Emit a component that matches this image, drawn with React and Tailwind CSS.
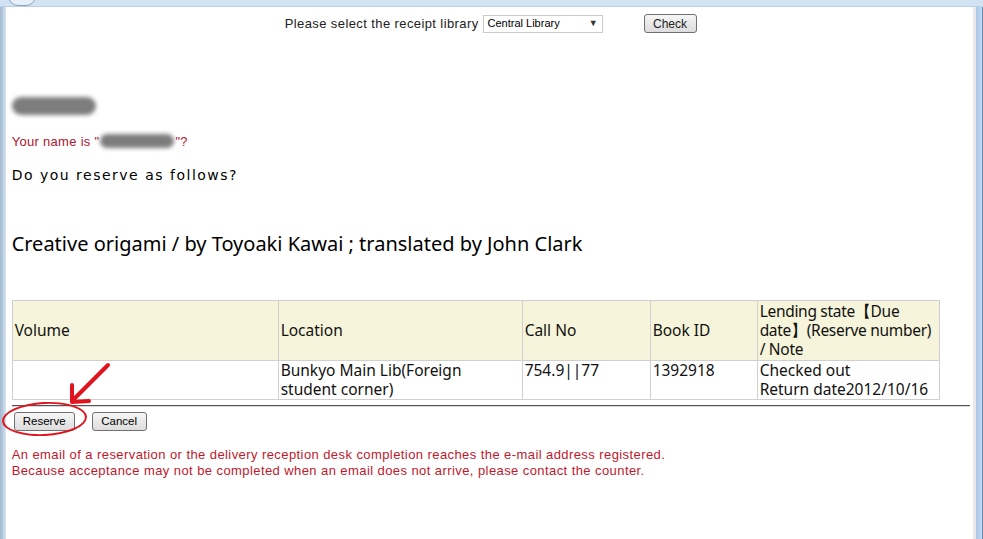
import { useState } from "react";

const rows = [
  {
    volume: "",
    location: "Bunkyo Main Lib(Foreign student corner)",
    callNo: "754.9||77",
    bookId: "1392918",
    state: "Checked out\nReturn date2012/10/16",
  },
];

const Blur = ({ className }) => (
  <span className={`inline-block rounded-full bg-[#7d7d7d] blur-[2px] ${className}`} />
);

const App = () => {
  const [library, setLibrary] = useState("Central Library");

  return (
    <div className="relative w-[983px] h-[539px] overflow-hidden bg-white flex flex-col">
      {/* window chrome top */}
      <div className="relative h-[7px] bg-[#d3e3f3] border-b border-[#b9cfe6]">
        <div className="absolute left-[8px] -top-[14px] w-[28px] h-[20px] rounded-full border border-[#8aa4bf] bg-[#e6eef7]" />
      </div>

      <div className="flex flex-1 min-h-0">
        <div className="w-[6px] bg-gradient-to-r from-[#9fb7cf] to-[#d6e4f2]" />

        {/* page */}
        <div className="relative flex-1 pl-[6px] pr-[3px] font-['Liberation_Sans',sans-serif] text-black">
          {/* library selector */}
          <div className="flex items-center justify-center pt-[7px] text-[13px] tracking-[0.4px] leading-none">
            <span className="text-[#222]">Please select the receipt library</span>
            <div className="ml-[4px] relative w-[120px] h-[18px] border border-[#c9c9c9] bg-white flex items-center pl-[4px] text-[11px] tracking-normal">
              <span>{library}</span>
              <span className="absolute right-[4px] top-[3px] text-[9px] text-[#333]">▼</span>
            </div>
            <button
              onClick={() => setLibrary("Central Library")}
              className="ml-[41px] w-[53px] h-[19px] rounded-[3px] border border-[#707070] bg-gradient-to-b from-[#f6f6f6] to-[#dcdcdc] text-[12px] tracking-normal text-[#222]"
            >
              Check
            </button>
          </div>

          {/* user */}
          <div className="mt-[62px] h-[22px]">
            <Blur className="w-[84px] h-[18px] mt-[2px]" />
          </div>
          <div className="mt-[17px] flex items-center text-[13px] tracking-[0.3px] text-[#b0152f] leading-none">
            <span>Your name is &quot;</span>
            <Blur className="w-[74px] h-[14px] mx-[1px]" />
            <span>&quot;?</span>
          </div>

          <p className="mt-[20px] text-[14px] tracking-[1.5px] leading-none font-['DejaVu_Sans',sans-serif]">
            Do you reserve as follows?
          </p>

          <h2 className="mt-[52px] text-[20px] leading-none font-['Noto_Sans',sans-serif]">
            Creative origami / by Toyoaki Kawai ; translated by John Clark
          </h2>

          {/* holdings table */}
          <table className="mt-[46px] w-[928px] border-collapse text-[15.5px] leading-[19px] font-['Noto_Sans',sans-serif] text-[#111]">
            <thead>
              <tr className="bg-[#f6f4da] h-[60px]">
                <th className="w-[266px] border border-[#cfcfcf] px-[2px] text-left font-normal align-middle">Volume</th>
                <th className="w-[244px] border border-[#cfcfcf] px-[2px] text-left font-normal align-middle">Location</th>
                <th className="w-[128px] border border-[#cfcfcf] px-[2px] text-left font-normal align-middle">Call No</th>
                <th className="w-[107px] border border-[#cfcfcf] px-[2px] text-left font-normal align-middle">Book ID</th>
                <th className="border border-[#cfcfcf] pl-[2px] pr-0 text-left font-normal align-middle tracking-[-0.3px]">
                  Lending state【Due date】(Reserve number) / Note
                </th>
              </tr>
            </thead>
            <tbody>
              {rows.map((r) => (
                <tr key={r.bookId}>
                  <td className="border border-[#cfcfcf] px-[2px] align-top">{r.volume}</td>
                  <td className="border border-[#cfcfcf] pl-[2px] pr-[12px] align-top">{r.location}</td>
                  <td className="border border-[#cfcfcf] px-[2px] align-top">{r.callNo}</td>
                  <td className="border border-[#cfcfcf] px-[2px] align-top">{r.bookId}</td>
                  <td className="border border-[#cfcfcf] px-[2px] align-top whitespace-pre-line">{r.state}</td>
                </tr>
              ))}
            </tbody>
          </table>

          <div className="mt-[5px] h-[2px] w-[958px] border-t border-[#555] border-b border-b-[#d8d8d8]" />

          {/* actions */}
          <div className="mt-[5px] flex gap-[17px] pl-[2px]">
            <button className="w-[61px] h-[19px] rounded-[3px] border border-[#707070] bg-gradient-to-b from-[#f6f6f6] to-[#dcdcdc] text-[11.5px]">
              Reserve
            </button>
            <button className="w-[55px] h-[19px] rounded-[3px] border border-[#707070] bg-gradient-to-b from-[#f6f6f6] to-[#dcdcdc] text-[11.5px]">
              Cancel
            </button>
          </div>

          <div className="mt-[16px] text-[13px] tracking-[0.42px] leading-[16px] text-[#c0182c]">
            <p>An email of a reservation or the delivery reception desk completion reaches the e-mail address registered.</p>
            <p>Because acceptance may not be completed when an email does not arrive, please contact the counter.</p>
          </div>

          {/* annotation: circle + arrow */}
          <div className="absolute left-[-4px] top-[395px] w-[85px] h-[34px] rounded-[50%] border-[2px] border-[#e0141e] -rotate-3" />
          <svg className="absolute left-[54px] top-[350px]" width="60" height="50" viewBox="0 0 60 50">
            <path d="M48 8 L14 42" stroke="#e0141e" strokeWidth="4" strokeLinecap="round" fill="none" />
            <path d="M12 28 L12 45 L29 44" stroke="#e0141e" strokeWidth="4" strokeLinecap="round" strokeLinejoin="round" fill="none" />
          </svg>
        </div>

        <div className="w-[4px] bg-[#e9e9e9]" />
        <div className="w-[7px] bg-gradient-to-r from-[#a8c8ea] to-[#c4dbf2] border-r border-[#6b8db0]" />
      </div>
    </div>
  );
};

export default App;
